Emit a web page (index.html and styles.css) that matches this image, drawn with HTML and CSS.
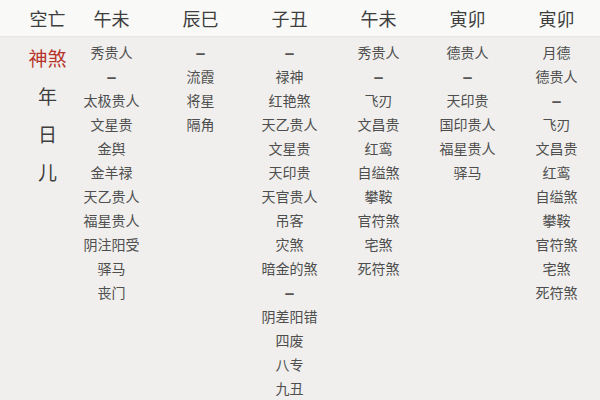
FILE: index.html
```html
<!DOCTYPE html>
<html lang="zh">
<head>
<meta charset="utf-8">
<link rel="stylesheet" href="styles.css">
</head>
<body>
<div class="page">
  <div class="head grid">
    <div class="hc">空亡</div>
    <div class="hc">午未</div>
    <div class="hc">辰巳</div>
    <div class="hc">子丑</div>
    <div class="hc">午未</div>
    <div class="hc">寅卯</div>
    <div class="hc">寅卯</div>
  </div>
  <div class="body grid">
    <div class="label">
      <div class="red">神煞</div>
      <div>年</div>
      <div>日</div>
      <div>儿</div>
    </div>
    <div class="col">
      <div>秀贵人</div><div class="dash">–</div><div>太极贵人</div><div>文星贵</div><div>金舆</div><div>金羊禄</div><div>天乙贵人</div><div>福星贵人</div><div>阴注阳受</div><div>驿马</div><div>丧门</div>
    </div>
    <div class="col">
      <div class="dash">–</div><div>流霞</div><div>将星</div><div>隔角</div>
    </div>
    <div class="col">
      <div class="dash">–</div><div>禄神</div><div>红艳煞</div><div>天乙贵人</div><div>文星贵</div><div>天印贵</div><div>天官贵人</div><div>吊客</div><div>灾煞</div><div>暗金的煞</div><div class="dash">–</div><div>阴差阳错</div><div>四废</div><div>八专</div><div>九丑</div>
    </div>
    <div class="col">
      <div>秀贵人</div><div class="dash">–</div><div>飞刃</div><div>文昌贵</div><div>红鸾</div><div>自缢煞</div><div>攀鞍</div><div>官符煞</div><div>宅煞</div><div>死符煞</div>
    </div>
    <div class="col">
      <div>德贵人</div><div class="dash">–</div><div>天印贵</div><div>国印贵人</div><div>福星贵人</div><div>驿马</div>
    </div>
    <div class="col">
      <div>月德</div><div>德贵人</div><div class="dash">–</div><div>飞刃</div><div>文昌贵</div><div>红鸾</div><div>自缢煞</div><div>攀鞍</div><div>官符煞</div><div>宅煞</div><div>死符煞</div>
    </div>
  </div>
</div>
</body>
</html>
```
FILE: styles.css
```css
html, body {
  margin: 0;
  padding: 0;
}
body {
  width: 600px;
  height: 400px;
  overflow: hidden;
  background: #f0efed;
  font-family: "Noto Sans CJK SC", "Noto Sans", sans-serif;
}
.page {
  width: 600px;
  height: 400px;
}
.grid {
  display: grid;
  grid-template-columns: 39px repeat(6, 89px);
  padding-left: 28px;
}
.head {
  height: 36px;
  background: #f9f9f7;
  box-shadow: 0 1px 2px rgba(0,0,0,0.05);
  align-items: center;
}
.hc {
  text-align: center;
  font-size: 18px;
  line-height: 36px;
  color: #3e3e3e;
  white-space: nowrap;
}
.body {
  padding-top: 4px;
}
.label {
  text-align: center;
  font-size: 19px;
  line-height: 38px;
  color: #3e3e3e;
  margin-top: -1px;
  white-space: nowrap;
}
.red {
  color: #b5342c;
}
.col {
  text-align: center;
  font-size: 14px;
  line-height: 24px;
  color: #4e4e4e;
  white-space: nowrap;
}
.dash {
  font-family: "Noto Sans", sans-serif;
  font-size: 20px;
  line-height: 24px;
  height: 24px;
  font-weight: 500;
  color: #555;
}
```
